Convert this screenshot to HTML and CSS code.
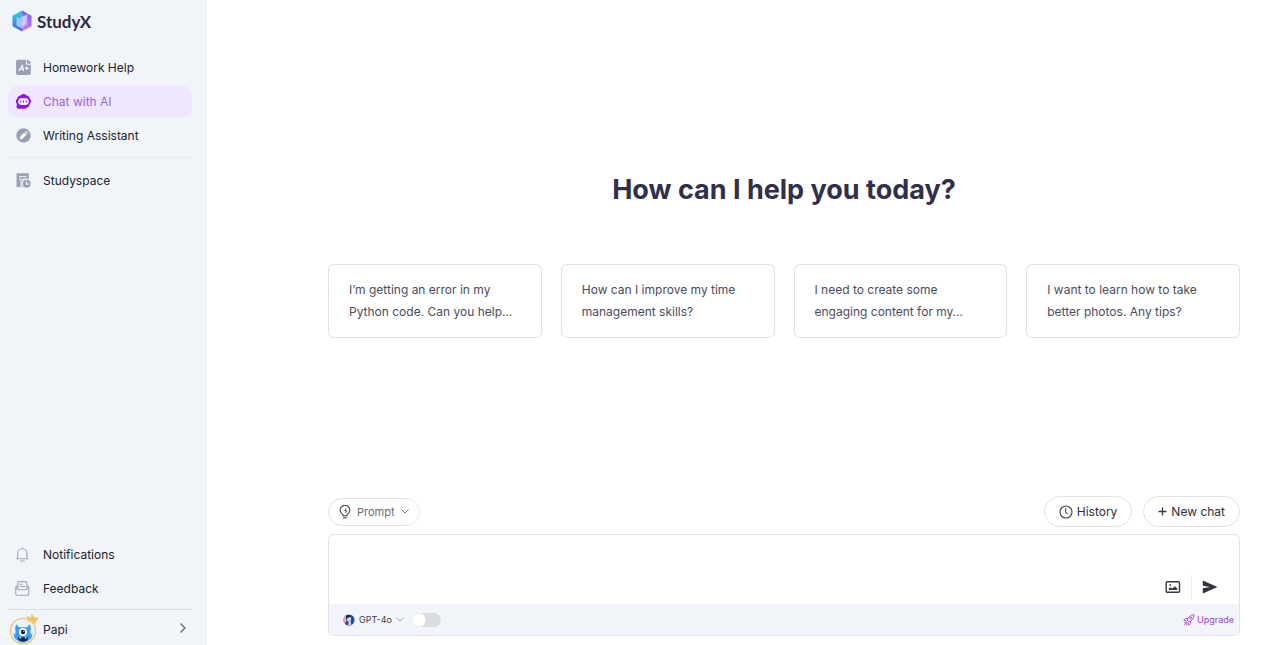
FILE: index.html
```
<!DOCTYPE html>
<html lang="en">
<head>
    <meta charset="UTF-8">
    <meta name="viewport" content="width=device-width, initial-scale=1">
    <title>StudyX - Chat with AI</title>
    <link rel="stylesheet" href="styles.css">
</head>
<body>

<div class="app">
    <aside class="sidebar">
        <a class="logo" href="#">
            <svg width="22" height="22" viewBox="0 0 22 22">
                <defs>
                    <linearGradient id="logo-left" x1="0" y1="0" x2="0" y2="1">
                        <stop offset="0" stop-color="#27d8d8"/>
                        <stop offset="1" stop-color="#4a62f0"/>
                    </linearGradient>
                    <linearGradient id="logo-right" x1="0" y1="0" x2="0" y2="1">
                        <stop offset="0" stop-color="#7a5af0"/>
                        <stop offset="1" stop-color="#d07cf5"/>
                    </linearGradient>
                    <linearGradient id="logo-core" x1="0" y1="0" x2="1" y2="1">
                        <stop offset="0" stop-color="#8fdcf8"/>
                        <stop offset="1" stop-color="#c3a0fa"/>
                    </linearGradient>
                </defs>
                <path d="M11 .5 1.500 5.700v10.600L11 21.500z" fill="url(#logo-left)"/>
                <path d="M11 .5l9.500 5.200v10.600L11 21.500z" fill="url(#logo-right)"/>
                <path d="M5.500 7 9 8.500l2.500-4 .5 2 4.500-2.500v10L11 18.500l-5.500-3z" fill="url(#logo-core)"/>
                <path d="M12 7.500l3.500-2-1.500 8-3 3z" fill="#dccfff"/>
            </svg>
            <span>StudyX</span>
        </a>

        <nav class="nav">
            <a class="nav-item" href="#">
                <svg width="17" height="17" viewBox="0 0 17 17">
                    <path d="M3 .8h7.800v3.700a1.300 1.300 0 0 0 1.300 1.300h3.700V14a2 2 0 0 1-2 2H3a2 2 0 0 1-2-2V2.800a2 2 0 0 1 2-2z" fill="#9aa1b5"/>
                    <path d="M11.800.8c2 0 4 1.800 4 4h-3.300a.7.7 0 0 1-.7-.7z" fill="#9aa1b5"/>
                    <path d="M3.800 12l3.600-5.500L8.600 12M5.300 10.300h3M9.900 9.300h3.600M11.700 7.500v3.600" fill="none" stroke="#fff" stroke-width="1.100"/>
                </svg>
                <span>Homework Help</span>
            </a>
            <a class="nav-item active" href="#">
                <svg width="17" height="17" viewBox="0 0 17 17">
                    <path d="M8.500 1c1.100 0 1.900.4 2.300 1.100 2.400.7 3.900 2.200 4.300 4.200.7.300 1 1 1 1.900s-.3 1.700-1 2c-.7 3.300-3 5.500-6.600 5.500H3.200c-1 0-1.600-.6-1.600-1.600l.3-3.500C1.200 10.200.9 9.300.9 8.300s.3-1.700 1-2c.5-2 2-3.600 4.300-4.200C6.600 1.400 7.400 1 8.500 1z" fill="#8f14e2"/>
                    <rect x="3.200" y="5.200" width="10.600" height="6.800" rx="3.400" fill="#fff"/>
                    <path d="M5.800 7.500v2.200M8.500 7.500v2.200M11.200 7.500v2.200" stroke="#8f14e2" stroke-width="1.100"/>
                </svg>
                <span>Chat with AI</span>
            </a>
            <a class="nav-item" href="#">
                <svg width="17" height="17" viewBox="0 0 17 17">
                    <circle cx="8.500" cy="8.500" r="7.200" fill="#9aa1b5"/>
                    <path d="M4.800 12.200l.5-2.600 4.200-4.200 2.100 2.100-4.200 4.200zM10.200 4.700l.7-.7 2.100 2.100-.7.700z" fill="#fff"/>
                </svg>
                <span>Writing Assistant</span>
            </a>
        </nav>
        <hr class="divider light">
        <nav class="nav">
            <a class="nav-item" href="#">
                <svg width="17" height="17" viewBox="0 0 17 17">
                    <path d="M1.500 1.200h12.300v13.900H1.500z" fill="#9aa1b5"/>
                    <path d="M4 4.700h7.500M4 7.300h7.500M6 7.500v7.600" stroke="#f1f5fa" stroke-width="1"/>
                    <circle cx="11.700" cy="11.700" r="4.500" fill="#9aa1b5" stroke="#f1f5fa" stroke-width="1.200"/>
                    <path d="M11.500 9.400v2.700h2.200" fill="none" stroke="#f1f5fa" stroke-width="1.100"/>
                </svg>
                <span>Studyspace</span>
            </a>
        </nav>

        <nav class="nav nav-bottom">
            <a class="nav-item" href="#">
                <svg width="17" height="17" viewBox="0 0 17 17" fill="none" stroke="#9ea5b8" stroke-width="1.100" stroke-linecap="round" stroke-linejoin="round">
                    <path d="M1.500 12.800h11.600M2.700 12.500V7.300a4.600 4.600 0 0 1 9.200 0v5.200M7.300 2.700V1.800M5.300 15h4"/>
                </svg>
                <span>Notifications</span>
            </a>
            <a class="nav-item" href="#">
                <svg width="17" height="17" viewBox="0 0 17 17" fill="none" stroke="#9ea5b8" stroke-width="1.100" stroke-linecap="round" stroke-linejoin="round">
                    <path d="M2.800 7.500V2.800a1.200 1.200 0 0 1 1.200-1.200h6.600a1.200 1.200 0 0 1 1.200 1.200v4.700M5 4.300h2.500M5 6.500h4.800M2.800 5.200C1.500 5.700.8 6.400.8 7.700V14a1.300 1.300 0 0 0 1.300 1.300h10.400a1.300 1.300 0 0 0 1.300-1.300V7.700c0-1.300-.7-2-2-2.500M.8 8l3.800 1.800h5.400L13.800 8"/>
                </svg>
                <span>Feedback</span>
            </a>
        </nav>
        <hr class="divider">
        <a class="profile" href="#">
            <svg width="32" height="34" viewBox="0 0 32 34">
                <circle cx="15" cy="20" r="12.600" fill="#e9f1fa" stroke="#edc777" stroke-width="1.400"/>
                <path d="M8.200 13.600c1.400.7 2 1.600 2.200 2.700h9.200c.2-1.100.8-2 2.200-2.700 1.100 2 1.200 4.200.6 6.500l.4 3.600 1.500-1.700c.3 3-.5 5-2.300 6.600A11 11 0 0 1 15 31.500a11 11 0 0 1-7-2.900c-1.800-1.600-2.600-3.600-2.300-6.600l1.500 1.700.4-3.600c-.6-2.300-.5-4.500.6-6.500z" fill="#3d9bf2"/>
                <path d="M9.700 26.300h10.600c-.4 2.900-2.200 4.400-5.300 4.400s-4.900-1.500-5.300-4.400z" fill="#122b50"/>
                <path d="M11.200 26.300h2.200l-1.100 1.600zM16.600 26.300h2.200l-1.100 1.600z" fill="#fff"/>
                <circle cx="15" cy="21" r="4" fill="#fff"/>
                <circle cx="15" cy="21" r="2.200" fill="#10233e"/>
                <circle cx="15.800" cy="20.300" r=".6" fill="#fff"/>
                <path d="M19 4.500l3.600 2.600.9-4.600 3.200 4.300 4.300-.5-3.400 5-1 1.600-7-2.700z" fill="#f2c05f"/>
                <path d="M20.600 9.300l6 2.300" stroke="#fbe3a6" stroke-width=".8"/>
            </svg>
            <span class="profile-name">Papi</span>
            <svg width="8" height="12" viewBox="0 0 8 12" fill="none" stroke="#555b69" stroke-width="1.100">
                <path d="M1.500 1.500 6 6l-4.500 4.500"/>
            </svg>
        </a>
    </aside>

    <main class="main">
        <h1 class="title">How can I help you today?</h1>

        <div class="cards">
            <button class="card" type="button">I’m getting an error in my<br>Python code. Can you help…</button>
            <button class="card" type="button">How can I improve my time management skills?</button>
            <button class="card" type="button">I need to create some<br>engaging content for my…</button>
            <button class="card" type="button">I want to learn how to take<br>better photos. Any tips?</button>
        </div>

        <div class="toolbar">
            <label class="pill prompt">
                <svg width="12" height="14" viewBox="0 0 12 14" fill="none" stroke="#43434f" stroke-linejoin="round">
                    <path d="M3.900 10.700V9.400a4.800 4.800 0 1 1 4.200 0v1.300zM4 12.800h4" stroke-width="1.100"/>
                    <path d="M7 3.600 5.900 5.700h1.800L6.500 8" stroke-width=".9"/>
                </svg>
                <select class="select" aria-label="Prompt">
                    <option>Prompt</option>
                </select>
                <svg width="8" height="5" viewBox="0 0 8 5" fill="none" stroke="#777782">
                    <path d="M.5.5 4 4 7.500.5"/>
                </svg>
            </label>
            <button class="pill" type="button">
                <svg width="14" height="14" viewBox="0 0 14 14" fill="none" stroke="#43435a" stroke-width="1.100">
                    <circle cx="7" cy="7" r="6"/>
                    <path d="M6.700 3.300v4l2 1.800"/>
                </svg>
                History
            </button>
            <button class="pill" type="button">
                <svg width="9" height="9" viewBox="0 0 9 9" stroke="#33334a" stroke-width="1.300">
                    <path d="M4.500.5v8M.5 4.500h8"/>
                </svg>
                New chat
            </button>
        </div>

        <form class="composer">
            <div class="composer-body">
                <textarea class="message" aria-label="Message"></textarea>
                <div class="composer-actions">
                    <button class="icon-button" type="button" aria-label="Add image">
                        <svg width="16" height="14" viewBox="0 0 16 14">
                            <rect x="1.200" y="1.700" width="13.300" height="10.600" rx="1" fill="none" stroke="#38383f" stroke-width="1.400"/>
                            <path d="M3.800 10V8.600l1.700-1.400 1.800 1.300 2.700-2.200 2.200 2.200V10z" fill="#38383f"/>
                            <circle cx="5.200" cy="5" r=".9" fill="#38383f"/>
                        </svg>
                    </button>
                    <button class="icon-button send" type="button" aria-label="Send">
                        <svg width="16" height="14" viewBox="0 0 16 14">
                            <path d="M.8.5 15.500 7 .8 13.500V8.300L8 7 .8 5.700z" fill="#33333a"/>
                        </svg>
                    </button>
                </div>
            </div>
            <div class="composer-footer">
                <label class="model">
                    <svg width="12" height="12" viewBox="0 0 12 12">
                        <circle cx="6" cy="6" r="5.500" fill="#254a91"/>
                        <path d="M3.500 1.100A5.500 5.500 0 0 0 2 9.800l1.600-3.500z" fill="#e5a5b2"/>
                        <path d="M4 3.800l2.500-1.300L8.200 4l-.6 3.500.7 3.500H5L5.700 8 4 6.500z" fill="#c8d5f2"/>
                        <path d="M3 1.500 6.200 1l1.600 1.400L4.500 4 3 6z" fill="#1b2352"/>
                    </svg>
                    <select class="select" aria-label="Model">
                        <option>GPT-4o</option>
                    </select>
                    <svg width="8" height="5" viewBox="0 0 8 5" fill="none" stroke="#a5a5ae">
                        <path d="M.5.5 4 4 7.500.5"/>
                    </svg>
                </label>
                <input class="switch" type="checkbox" aria-label="Use this model">
                <a class="upgrade" href="#">
                    <svg width="12" height="12" viewBox="0 0 12 12" fill="none" stroke="#b44ae0" stroke-width=".9" stroke-linejoin="round">
                        <path d="M4 6C5.200 3 7.500 1 11.200.8c-.2 3.600-2.100 6-5.200 7.200zM4.800 4.500l-2.300-.2-1.700 2L3.600 7M7.500 7.200l.2 2.300-2 1.700L5 8.400M3.200 8l-2 .9M3.900 8.300 1.300 10.900M4.300 8.900l-.9 2.300"/>
                        <circle cx="7.900" cy="4.100" r="1.100"/>
                    </svg>
                    Upgrade
                </a>
            </div>
        </form>
    </main>
</div>

</body>
</html>
```

FILE: styles.css
```
* {
    box-sizing: border-box;
}

body {
    margin: 0;
    font-family: Inter, "Open Sans", sans-serif;
    font-size: 12px;
    color: #22242b;
    background: #fff;
}

a {
    color: inherit;
    text-decoration: none;
}

button, select, textarea {
    font: inherit;
    color: inherit;
}

svg {
    flex: none;
}

.app {
    display: flex;
    min-height: 100vh;
}

/* sidebar */
.sidebar {
    flex: none;
    display: flex;
    flex-direction: column;
    width: 207px;
    padding: 10px 14px 0 8px;
    background: #f1f5fa;
    border-right: 1px solid #eef1f6;
}

.logo {
    display: flex;
    align-items: center;
    gap: 4px;
    height: 22px;
    margin: 0 0 20px 3px;
    font-family: Lato, sans-serif;
    font-size: 17px;
    font-weight: 700;
    color: #2b2b45;
}

.nav {
    display: flex;
    flex-direction: column;
    gap: 3px;
}

.nav-item {
    display: flex;
    align-items: center;
    gap: 11px;
    height: 31px;
    padding: 0 7px;
    border-radius: 9px;
}

.nav-item.active {
    color: #9a63dc;
    background: #eee7fe;
}

.nav-bottom {
    margin-top: auto;
}

.divider {
    width: 100%;
    height: 1px;
    margin: 5px 0 0;
    border: none;
    background: #d9dde4;
}

.divider.light {
    margin: 6px 0 7px;
    background: #e8ecf1;
}

.profile {
    display: flex;
    align-items: center;
    height: 35px;
    padding-right: 5px;
}

.profile-name {
    flex: 1;
    margin: 4px 0 0 3px;
}

/* main */
.main {
    flex: 1;
    min-width: 0;
    display: flex;
    flex-direction: column;
    padding: 170px 40px 9px 121px;
}

.title {
    margin: 0 0 54px;
    font-size: 27px;
    line-height: 40px;
    font-weight: 700;
    text-align: center;
    color: #30304a;
}

.cards {
    display: grid;
    grid-template-columns: repeat(4, 1fr);
    gap: 19px;
}

.card {
    padding: 14px 20px;
    border: 1px solid #e0e1e4;
    border-radius: 6px;
    background: #fff;
    color: #4b4b5e;
    line-height: 22px;
    text-align: left;
}

.toolbar {
    display: flex;
    align-items: center;
    gap: 11px;
    margin: auto 0 7px;
}

.pill {
    display: flex;
    align-items: center;
    justify-content: center;
    gap: 4px;
    height: 31px;
    padding: 0 14px;
    border: 1px solid #e0e1e4;
    border-radius: 16px;
    background: #fff;
    color: #303038;
}

.prompt {
    gap: 6px;
    height: 28px;
    padding: 0 10px;
    margin-right: auto;
    font-size: 11px;
    color: #6a6a73;
}

.select {
    appearance: none;
    padding: 0;
    border: none;
    background: none;
}

.composer {
    border: 1px solid #e0e3e8;
    border-radius: 6px;
    overflow: hidden;
}

.composer-body {
    display: flex;
    align-items: flex-end;
    height: 69px;
    padding: 4px 14px 5px 20px;
}

.message {
    flex: 1;
    align-self: stretch;
    padding: 8px 0;
    border: none;
    outline: none;
    resize: none;
    background: none;
}

.composer-actions {
    display: flex;
    align-items: center;
}

.icon-button {
    display: flex;
    align-items: center;
    height: 24px;
    padding: 0 10px;
    border: none;
    background: none;
}

.send {
    border-left: 1px solid #ececf0;
    padding: 0 7px 0 10px;
}

.composer-footer {
    display: flex;
    align-items: center;
    gap: 8px;
    height: 31px;
    padding: 0 5px 0 14px;
    font-size: 9px;
    background: #f1f5fa;
}

.model {
    display: flex;
    align-items: center;
    gap: 4px;
    color: #404048;
}

.switch {
    appearance: none;
    width: 29px;
    height: 14px;
    margin: 0;
    border-radius: 7px;
    background: radial-gradient(circle at 7px 7px, #fff 6px, #dcdde3 7px);
}

.upgrade {
    display: flex;
    align-items: center;
    gap: 2px;
    margin-left: auto;
    color: #a63be0;
}
```
